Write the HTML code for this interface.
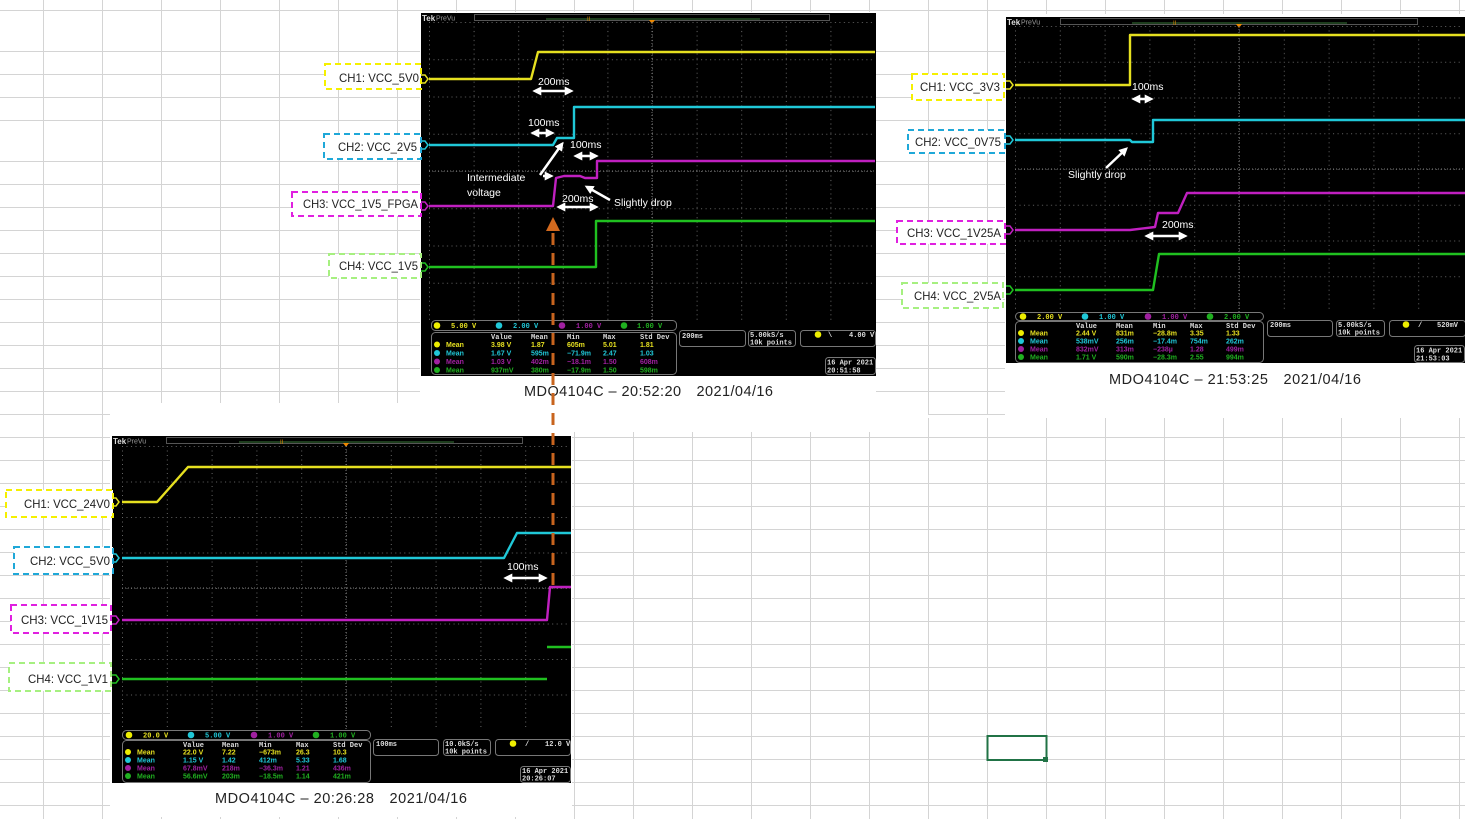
<!DOCTYPE html>
<html><head><meta charset="utf-8"><style>
html,body{margin:0;padding:0;background:#fff;width:1465px;height:819px;overflow:hidden}
svg{display:block}
text{font-family:"Liberation Sans","Noto Sans CJK JP",sans-serif}
.m{font-size:7px;font-family:"Liberation Mono","DejaVu Sans Mono",monospace;font-weight:bold}
.h{fill:#ddd}
.lb{font-size:12px;fill:#222}
.cap{font-size:14.5px;fill:#222}
.an{font-size:10.5px;fill:#fff}
.y{fill:#e6e020}.c{fill:#20c8d8}.p{fill:#a020a0}.g{fill:#20b020}
.tr{fill:none;stroke-width:2.4;stroke-linejoin:round}
.box{fill:none;stroke:#777;stroke-width:1}
</style></head><body>
<svg width="1465" height="819" viewBox="0 0 1465 819" xmlns="http://www.w3.org/2000/svg">
<defs>
<marker id="ah" viewBox="0 0 10 10" refX="7" refY="5" markerWidth="3.6" markerHeight="3.6" orient="auto-start-reverse"><path d="M0,0 L10,5 L0,10 z" fill="#fff"/></marker>
<pattern id="pA" patternUnits="userSpaceOnUse" x="429" y="22" width="44.6" height="37.25"><path d="M0.5,0V37.25M0,0.5H44.6" stroke="#666" stroke-width="1" stroke-dasharray="1 3.5"/></pattern>
<pattern id="pB" patternUnits="userSpaceOnUse" x="1015" y="26" width="44.8" height="35.75"><path d="M0.5,0V35.75M0,0.5H44.8" stroke="#666" stroke-width="1" stroke-dasharray="1 3.5"/></pattern>
<pattern id="pC" patternUnits="userSpaceOnUse" x="122" y="446" width="44.8" height="35.5"><path d="M0.5,0V35.5M0,0.5H44.8" stroke="#666" stroke-width="1" stroke-dasharray="1 3.5"/></pattern>
</defs>

<g stroke="#d4d4d4" stroke-width="1">
<path d="M0,10.5H1465M0,51.5H1465M0,74.5H1465M0,97.5H1465M0,120.5H1465M0,161.5H1465M0,184.5H1465M0,207.5H1465M0,230.5H1465M0,253.5H1465M0,276.5H1465M0,299.5H1465M0,322.5H1465M0,345.5H1465M0,368.5H1465M0,391.5H1465M0,414.5H1465M0,437.5H1465M0,460.5H1465M0,483.5H1465M0,506.5H1465M0,529.5H1465M0,552.5H1465M0,575.5H1465M0,598.5H1465M0,621.5H1465M0,644.5H1465M0,667.5H1465M0,690.5H1465M0,713.5H1465M0,736.5H1465M0,759.5H1465M0,782.5H1465M0,805.5H1465"/>
<path d="M43.5,0V819M102.5,0V819M161.5,0V819M220.5,0V819M279.5,0V819M338.5,0V819M397.5,0V819M456.5,0V819M515.5,0V819M574.5,0V819M633.5,0V819M692.5,0V819M751.5,0V819M810.5,0V819M869.5,0V819M928.5,0V819M987.5,0V819M1046.5,0V819M1105.5,0V819M1164.5,0V819M1223.5,0V819M1282.5,0V819M1341.5,0V819M1400.5,0V819M1459.5,0V819"/>
</g>
<rect x="420" y="12" width="456" height="420" fill="#fff"/>
<rect x="572" y="403" width="356" height="29" fill="#fff"/>
<rect x="876" y="415" width="170" height="3" fill="#fff"/>
<rect x="1005" y="14" width="460" height="404" fill="#fff"/>
<rect x="110" y="403" width="462" height="414" fill="#fff"/>

<rect x="987.5" y="736" width="59" height="24" fill="none" stroke="#217346" stroke-width="2"/>
<rect x="1043" y="757" width="5" height="5" fill="#217346"/>

<!-- ============ SCOPE A ============ -->
<rect x="421" y="13" width="455" height="363" fill="#000"/>
<text x="422" y="21" font-size="8" font-weight="bold" fill="#ddd">Tek</text>
<text x="436" y="20.5" font-size="7" fill="#999">PreVu</text>
<rect x="474.5" y="14.5" width="355" height="6" fill="none" stroke="#555"/>
<line x1="546" y1="19" x2="760" y2="19" stroke="#3a7a3a"/>
<text x="587" y="21" font-size="6" fill="#d80">II</text>
<path d="M649,20 L655,20 L652,24 z" fill="#e80"/>
<rect x="429" y="22" width="446" height="298" fill="url(#pA)"/>
<path d="M652,22V320M429,171H875" stroke="#777" stroke-dasharray="1 2"/>
<path class="tr" stroke="#e6e020" d="M429,79 H531 L538,52 H875"/>
<path class="tr" stroke="#20c8d8" d="M429,145 H553 L557,138 H574 V107 H875"/>
<path class="tr" stroke="#c020c0" d="M429,206 H553 L556,178 L564,176 H580 L585,178 H597 V161 H875"/>
<path class="tr" stroke="#20c020" d="M429,267 H596 V221 H875"/>
<g fill="none" stroke-width="1.5">
<path d="M421,75h4l3,4l-3,4h-4" stroke="#e6e020"/><path d="M421,141h4l3,4l-3,4h-4" stroke="#20c8d8"/>
<path d="M421,202h4l3,4l-3,4h-4" stroke="#c020c0"/><path d="M421,263h4l3,4l-3,4h-4" stroke="#20c020"/>
</g>
<g stroke="#fff" stroke-width="2.5" marker-start="url(#ah)" marker-end="url(#ah)">
<line x1="535" y1="91" x2="571" y2="91"/><line x1="533" y1="133" x2="552" y2="133"/>
<line x1="576" y1="156" x2="596" y2="156"/><line x1="559" y1="207" x2="596" y2="207"/>
</g>
<g stroke="#fff" stroke-width="2.5" marker-end="url(#ah)">
<line x1="540" y1="175" x2="562" y2="144"/><line x1="543" y1="176" x2="551" y2="176"/>
<line x1="610" y1="200" x2="587" y2="187"/>
</g>
<text class="an" x="538" y="85">200ms</text><text class="an" x="528" y="126">100ms</text>
<text class="an" x="570" y="148">100ms</text><text class="an" x="562" y="202">200ms</text>
<text class="an" x="467" y="181">Intermediate</text><text class="an" x="467" y="196">voltage</text>
<text class="an" x="614" y="206">Slightly drop</text>
<rect class="box" x="431.5" y="320.5" width="245" height="10" rx="4"/>
<circle cx="437" cy="325.5" r="3.3" fill="#ee0"/><circle cx="499" cy="325.5" r="3.3" fill="#20c8d8"/><circle cx="562" cy="325.5" r="3.3" fill="#a020a0"/><circle cx="624" cy="325.5" r="3.3" fill="#20b020"/>
<text class="m y" x="451" y="328">5.00 V</text><text class="m c" x="513" y="328">2.00 V</text><text class="m p" x="576" y="328">1.00 V</text><text class="m g" x="637" y="328">1.00 V</text>
<rect class="box" x="431.5" y="332.5" width="245" height="42" rx="4"/>
<text class="m h" x="491" y="339">Value</text><text class="m h" x="531" y="339">Mean</text><text class="m h" x="567" y="339">Min</text><text class="m h" x="603" y="339">Max</text><text class="m h" x="640" y="339">Std Dev</text>
<circle cx="437" cy="344.5" r="3" fill="#ee0"/><circle cx="437" cy="353" r="3" fill="#20c8d8"/><circle cx="437" cy="361.5" r="3" fill="#a020a0"/><circle cx="437" cy="370" r="3" fill="#20b020"/>
<g class="m y"><text x="446" y="347">Mean</text><text x="491" y="347">3.98 V</text><text x="531" y="347">1.87</text><text x="567" y="347">605m</text><text x="603" y="347">5.01</text><text x="640" y="347">1.81</text></g>
<g class="m c"><text x="446" y="355.5">Mean</text><text x="491" y="355.5">1.67 V</text><text x="531" y="355.5">595m</text><text x="567" y="355.5">−71.9m</text><text x="603" y="355.5">2.47</text><text x="640" y="355.5">1.03</text></g>
<g class="m p"><text x="446" y="364">Mean</text><text x="491" y="364">1.03 V</text><text x="531" y="364">402m</text><text x="567" y="364">−18.1m</text><text x="603" y="364">1.50</text><text x="640" y="364">608m</text></g>
<g class="m g"><text x="446" y="372.5">Mean</text><text x="491" y="372.5">937mV</text><text x="531" y="372.5">380m</text><text x="567" y="372.5">−17.9m</text><text x="603" y="372.5">1.50</text><text x="640" y="372.5">598m</text></g>
<rect class="box" x="679.5" y="330.5" width="66" height="16" rx="3"/><text class="m h" x="682" y="338">200ms</text>
<rect class="box" x="748.5" y="330.5" width="47" height="16" rx="3"/><text class="m h" x="750" y="337">5.00kS/s</text><text class="m h" x="750" y="344.5">10k points</text>
<rect class="box" x="800.5" y="330.5" width="75" height="16" rx="3"/><circle cx="818" cy="334.5" r="3.3" fill="#ee0"/><text class="m h" x="828" y="337">\</text><text class="m h" x="849" y="337">4.00 V</text>
<rect class="box" x="825.5" y="357.5" width="50" height="17" rx="3"/><text class="m h" x="827" y="364.5">16 Apr 2021</text><text class="m h" x="827" y="372.5">20:51:58</text>
<text class="cap" x="524" y="396" textLength="249">MDO4104C – 20:52:20　2021/04/16</text>

<g fill="#fff" stroke-width="2" stroke-dasharray="6 4">
<rect x="325" y="64" width="96" height="25" stroke="#f5f000"/>
<rect x="324" y="134" width="97" height="25" stroke="#1fa8d8"/>
<rect x="292" y="192" width="129" height="24" stroke="#e020e0"/>
<rect x="329" y="254" width="92" height="24" stroke="#a6f080"/>
</g>
<text class="lb" x="339" y="82" textLength="80" lengthAdjust="spacingAndGlyphs">CH1: VCC_5V0</text><text class="lb" x="338" y="151" textLength="79" lengthAdjust="spacingAndGlyphs">CH2: VCC_2V5</text>
<text class="lb" x="303" y="208" textLength="115" lengthAdjust="spacingAndGlyphs">CH3: VCC_1V5_FPGA</text><text class="lb" x="339" y="270" textLength="79" lengthAdjust="spacingAndGlyphs">CH4: VCC_1V5</text>

<!-- ============ SCOPE B ============ -->
<rect x="1006" y="17" width="459" height="346" fill="#000"/>
<text x="1007" y="25" font-size="8" font-weight="bold" fill="#ddd">Tek</text>
<text x="1021" y="24.5" font-size="7" fill="#999">PreVu</text>
<rect x="1060.5" y="18.5" width="357" height="6" fill="none" stroke="#555"/>
<line x1="1132" y1="23" x2="1347" y2="23" stroke="#3a7a3a"/>
<text x="1173" y="25" font-size="6" fill="#d80">II</text>
<path d="M1236,24 L1242,24 L1239,28 z" fill="#e80"/>
<rect x="1015" y="26" width="448" height="286" fill="url(#pB)"/>
<path d="M1239,26V312M1015,169H1465" stroke="#777" stroke-dasharray="1 2"/>
<path class="tr" stroke="#e6e020" d="M1015,85 H1130 V35 H1465"/>
<path class="tr" stroke="#20c8d8" d="M1015,140 H1130 L1132,142 H1153 V120 H1465"/>
<path class="tr" stroke="#c020c0" d="M1015,230 H1130 L1155,227 L1158,213 H1178 L1187,193 H1465"/>
<path class="tr" stroke="#20c020" d="M1015,290 H1153 L1159,254 H1465"/>
<g fill="none" stroke-width="1.5">
<path d="M1006,81h4l3,4l-3,4h-4" stroke="#e6e020"/><path d="M1006,136h4l3,4l-3,4h-4" stroke="#20c8d8"/>
<path d="M1006,226h4l3,4l-3,4h-4" stroke="#c020c0"/><path d="M1006,286h4l3,4l-3,4h-4" stroke="#20c020"/>
</g>
<g stroke="#fff" stroke-width="2.5" marker-start="url(#ah)" marker-end="url(#ah)">
<line x1="1134" y1="99" x2="1151" y2="99"/><line x1="1147" y1="236" x2="1185" y2="236"/>
</g>
<line x1="1106" y1="168" x2="1126" y2="149" stroke="#fff" stroke-width="2.5" marker-end="url(#ah)"/>
<text class="an" x="1132" y="90">100ms</text><text class="an" x="1068" y="178">Slightly drop</text><text class="an" x="1162" y="228">200ms</text>
<rect class="box" x="1015.5" y="312.5" width="248" height="8" rx="4"/>
<circle cx="1023" cy="316.5" r="3.3" fill="#ee0"/><circle cx="1085" cy="316.5" r="3.3" fill="#20c8d8"/><circle cx="1148" cy="316.5" r="3.3" fill="#a020a0"/><circle cx="1210" cy="316.5" r="3.3" fill="#20b020"/>
<text class="m y" x="1037" y="319">2.00 V</text><text class="m c" x="1099" y="319">1.00 V</text><text class="m p" x="1162" y="319">1.00 V</text><text class="m g" x="1224" y="319">2.00 V</text>
<rect class="box" x="1015.5" y="321.5" width="248" height="41" rx="4"/>
<text class="m h" x="1076" y="328">Value</text><text class="m h" x="1116" y="328">Mean</text><text class="m h" x="1153" y="328">Min</text><text class="m h" x="1190" y="328">Max</text><text class="m h" x="1226" y="328">Std Dev</text>
<circle cx="1021" cy="333" r="3" fill="#ee0"/><circle cx="1021" cy="341" r="3" fill="#20c8d8"/><circle cx="1021" cy="349" r="3" fill="#a020a0"/><circle cx="1021" cy="357" r="3" fill="#20b020"/>
<g class="m y"><text x="1030" y="335.5">Mean</text><text x="1076" y="335.5">2.44 V</text><text x="1116" y="335.5">831m</text><text x="1153" y="335.5">−28.8m</text><text x="1190" y="335.5">3.35</text><text x="1226" y="335.5">1.33</text></g>
<g class="m c"><text x="1030" y="343.5">Mean</text><text x="1076" y="343.5">538mV</text><text x="1116" y="343.5">256m</text><text x="1153" y="343.5">−17.4m</text><text x="1190" y="343.5">754m</text><text x="1226" y="343.5">262m</text></g>
<g class="m p"><text x="1030" y="351.5">Mean</text><text x="1076" y="351.5">832mV</text><text x="1116" y="351.5">313m</text><text x="1153" y="351.5">−238µ</text><text x="1190" y="351.5">1.28</text><text x="1226" y="351.5">499m</text></g>
<g class="m g"><text x="1030" y="359.5">Mean</text><text x="1076" y="359.5">1.71 V</text><text x="1116" y="359.5">590m</text><text x="1153" y="359.5">−28.3m</text><text x="1190" y="359.5">2.55</text><text x="1226" y="359.5">994m</text></g>
<rect class="box" x="1267.5" y="320.5" width="65" height="16" rx="3"/><text class="m h" x="1270" y="327">200ms</text>
<rect class="box" x="1336.5" y="320.5" width="48" height="16" rx="3"/><text class="m h" x="1338" y="327">5.00kS/s</text><text class="m h" x="1338" y="334.5">10k points</text>
<rect class="box" x="1389.5" y="320.5" width="76" height="16" rx="3"/><circle cx="1406" cy="324.5" r="3.3" fill="#ee0"/><text class="m h" x="1418" y="327">/</text><text class="m h" x="1437" y="327">520mV</text>
<rect class="box" x="1414.5" y="345.5" width="50" height="17" rx="3"/><text class="m h" x="1416" y="352.5">16 Apr 2021</text><text class="m h" x="1416" y="360.5">21:53:03</text>
<text class="cap" x="1109" y="384" textLength="252">MDO4104C – 21:53:25　2021/04/16</text>
<g fill="#fff" stroke-width="2" stroke-dasharray="6 4">
<rect x="912" y="74" width="92" height="26" stroke="#f5f000"/>
<rect x="908" y="130" width="97" height="23" stroke="#1fa8d8"/>
<rect x="897" y="221" width="108" height="23" stroke="#e020e0"/>
<rect x="902" y="283" width="101" height="25" stroke="#a6f080"/>
</g>
<text class="lb" x="920" y="91" textLength="80" lengthAdjust="spacingAndGlyphs">CH1: VCC_3V3</text><text class="lb" x="915" y="146" textLength="86" lengthAdjust="spacingAndGlyphs">CH2: VCC_0V75</text>
<text class="lb" x="907" y="237" textLength="94" lengthAdjust="spacingAndGlyphs">CH3: VCC_1V25A</text><text class="lb" x="914" y="300" textLength="87" lengthAdjust="spacingAndGlyphs">CH4: VCC_2V5A</text>

<!-- ============ SCOPE C ============ -->
<rect x="112" y="436" width="459" height="347" fill="#000"/>
<text x="113" y="444" font-size="8" font-weight="bold" fill="#ddd">Tek</text>
<text x="127" y="443.5" font-size="7" fill="#999">PreVu</text>
<rect x="166.5" y="437.5" width="356" height="6" fill="none" stroke="#555"/>
<line x1="239" y1="442" x2="454" y2="442" stroke="#3a7a3a"/>
<text x="280" y="444" font-size="6" fill="#d80">II</text>
<path d="M343,443 L349,443 L346,447 z" fill="#e80"/>
<rect x="122" y="446" width="448" height="284" fill="url(#pC)"/>
<path d="M346,446V730M122,588H571" stroke="#777" stroke-dasharray="1 2"/>
<path class="tr" stroke="#e6e020" d="M122,502 H157 L188,467 H571"/>
<path class="tr" stroke="#20c8d8" d="M122,558 H504 L517,533 H571"/>
<path class="tr" stroke="#c020c0" d="M122,620 H547 L550,587 H571"/>
<path class="tr" stroke="#20c020" d="M122,679 H547 M547,647 H571"/>
<g fill="none" stroke-width="1.5">
<path d="M112,498h4l3,4l-3,4h-4" stroke="#e6e020"/><path d="M112,554h4l3,4l-3,4h-4" stroke="#20c8d8"/>
<path d="M112,616h4l3,4l-3,4h-4" stroke="#c020c0"/><path d="M112,675h4l3,4l-3,4h-4" stroke="#20c020"/>
</g>
<line x1="506" y1="578" x2="545" y2="578" stroke="#fff" stroke-width="2.5" marker-start="url(#ah)" marker-end="url(#ah)"/>
<text class="an" x="507" y="570">100ms</text>
<rect class="box" x="122.5" y="730.5" width="248" height="9" rx="4"/>
<circle cx="129" cy="735" r="3.3" fill="#ee0"/><circle cx="191" cy="735" r="3.3" fill="#20c8d8"/><circle cx="254" cy="735" r="3.3" fill="#a020a0"/><circle cx="316" cy="735" r="3.3" fill="#20b020"/>
<text class="m y" x="143" y="737.5">20.0 V</text><text class="m c" x="205" y="737.5">5.00 V</text><text class="m p" x="268" y="737.5">1.00 V</text><text class="m g" x="330" y="737.5">1.00 V</text>
<rect class="box" x="122.5" y="740.5" width="248" height="42" rx="4"/>
<text class="m h" x="183" y="747">Value</text><text class="m h" x="222" y="747">Mean</text><text class="m h" x="259" y="747">Min</text><text class="m h" x="296" y="747">Max</text><text class="m h" x="333" y="747">Std Dev</text>
<circle cx="128" cy="752" r="3" fill="#ee0"/><circle cx="128" cy="760" r="3" fill="#20c8d8"/><circle cx="128" cy="768" r="3" fill="#a020a0"/><circle cx="128" cy="776" r="3" fill="#20b020"/>
<g class="m y"><text x="137" y="754.5">Mean</text><text x="183" y="754.5">22.0 V</text><text x="222" y="754.5">7.22</text><text x="259" y="754.5">−673m</text><text x="296" y="754.5">26.3</text><text x="333" y="754.5">10.3</text></g>
<g class="m c"><text x="137" y="762.5">Mean</text><text x="183" y="762.5">1.15 V</text><text x="222" y="762.5">1.42</text><text x="259" y="762.5">412m</text><text x="296" y="762.5">5.33</text><text x="333" y="762.5">1.68</text></g>
<g class="m p"><text x="137" y="770.5">Mean</text><text x="183" y="770.5">67.8mV</text><text x="222" y="770.5">218m</text><text x="259" y="770.5">−36.3m</text><text x="296" y="770.5">1.21</text><text x="333" y="770.5">436m</text></g>
<g class="m g"><text x="137" y="778.5">Mean</text><text x="183" y="778.5">56.6mV</text><text x="222" y="778.5">203m</text><text x="259" y="778.5">−18.5m</text><text x="296" y="778.5">1.14</text><text x="333" y="778.5">421m</text></g>
<rect class="box" x="373.5" y="739.5" width="65" height="16" rx="3"/><text class="m h" x="376" y="746">100ms</text>
<rect class="box" x="443.5" y="739.5" width="47" height="16" rx="3"/><text class="m h" x="445" y="746">10.0kS/s</text><text class="m h" x="445" y="753.5">10k points</text>
<rect class="box" x="495.5" y="739.5" width="75" height="16" rx="3"/><circle cx="513" cy="743.5" r="3.3" fill="#ee0"/><text class="m h" x="525" y="746">/</text><text class="m h" x="545" y="746">12.0 V</text>
<rect class="box" x="520.5" y="766.5" width="50" height="16" rx="3"/><text class="m h" x="522" y="773">16 Apr 2021</text><text class="m h" x="522" y="780.5">20:26:07</text>
<text class="cap" x="215" y="803" textLength="252">MDO4104C – 20:26:28　2021/04/16</text>
<g fill="#fff" stroke-width="2" stroke-dasharray="6 4">
<rect x="6" y="490" width="107" height="27" stroke="#f5f000"/>
<rect x="14" y="547" width="99" height="27" stroke="#1fa8d8"/>
<rect x="11" y="605" width="100" height="28" stroke="#e020e0"/>
<rect x="9" y="663" width="102" height="28" stroke="#a6f080"/>
</g>
<text class="lb" x="24" y="508" textLength="86" lengthAdjust="spacingAndGlyphs">CH1: VCC_24V0</text><text class="lb" x="30" y="565" textLength="80" lengthAdjust="spacingAndGlyphs">CH2: VCC_5V0</text>
<text class="lb" x="21" y="624" textLength="87" lengthAdjust="spacingAndGlyphs">CH3: VCC_1V15</text><text class="lb" x="28" y="683" textLength="80" lengthAdjust="spacingAndGlyphs">CH4: VCC_1V1</text>

<path d="M546,231 L553,217 L560,231 z" fill="#d2691e"/>
<line x1="553" y1="233" x2="553" y2="590" stroke="#c8641e" stroke-width="3" stroke-dasharray="12 8"/>
</svg>
</body></html>
